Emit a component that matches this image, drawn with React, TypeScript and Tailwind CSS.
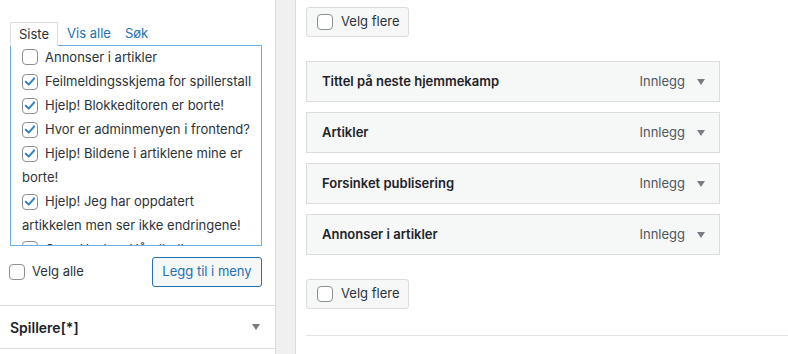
import React from 'react';

const FONT = "font-['Inter','Liberation_Sans',sans-serif]";

function Check({ checked = false }: { checked?: boolean }) {
  return (
    <span className="inline-flex h-4 w-4 shrink-0 items-center justify-center rounded-[4px] border border-[#8c8f94] bg-white align-[-3px]">
      {checked && (
        <svg viewBox="0 0 16 16" className="h-[15px] w-[15px]">
          <path d="M3.2 8.2 6.6 11.6 12.8 4.4" fill="none" stroke="#3582c4" strokeWidth="2.3" strokeLinecap="round" strokeLinejoin="round" />
        </svg>
      )}
    </span>
  );
}

function Arrow() {
  return (
    <svg viewBox="0 0 8 6" className="h-[6px] w-[8px]">
      <path d="M0 0h8L4 6z" fill="#787c82" />
    </svg>
  );
}

const ITEMS: { label: React.ReactNode; checked: boolean }[] = [
  { label: 'Annonser i artikler', checked: false },
  { label: 'Feilmeldingsskjema for spillerstall', checked: true },
  { label: 'Hjelp! Blokkeditoren er borte!', checked: true },
  { label: 'Hvor er adminmenyen i frontend?', checked: true },
  { label: <>Hjelp! Bildene i artiklene mine er<br />borte!</>, checked: true },
  { label: <>Hjelp! Jeg har oppdatert<br />artikkelen men ser ikke endringene!</>, checked: true },
  { label: 'Casa Haslum Håndball', checked: false },
];

const MENU = ['Tittel på neste hjemmekamp', 'Artikler', 'Forsinket publisering', 'Annonser i artikler'];

function VelgFlere() {
  return (
    <div className="flex h-[30px] w-[103px] items-center gap-2 rounded-[3px] border border-[#dcdcde] bg-[#f6f7f7] pl-[10px] text-[13px] text-[#2c3338]">
      <Check />
      <span>Velg flere</span>
    </div>
  );
}

export default function App() {
  return (
    <div className={`flex h-[354px] w-[788px] overflow-hidden bg-white ${FONT}`}>
      {/* Left: menu item picker */}
      <div className="flex w-[276px] shrink-0 flex-col border-r border-[#dcdcde] bg-white">
        <div className="border-b border-[#dcdcde] px-[10px] pt-[22px] pb-[18px]">
          <div className="flex h-[23px] items-end text-[13px]">
            <div className="relative z-10 -mb-px flex h-[24px] items-center border border-b-0 border-[#dcdcde] bg-white px-[8px] text-[#2c3338]">
              Siste
            </div>
            <span className="ml-[9px] flex h-[23px] items-center text-[#2271b1]">Vis alle</span>
            <span className="ml-[14px] flex h-[23px] items-center text-[#2271b1]">Søk</span>
          </div>
          <div className="h-[201px] w-[252px] overflow-hidden border border-[#72aee6] bg-white pl-[11px] pr-2 text-[13px] leading-[24px] text-[#2c3338]">
            <div className="-mt-[1px]">
              {ITEMS.map((it, i) => (
                <div key={i} className="whitespace-nowrap">
                  <Check checked={it.checked} />
                  <span className="ml-[7px]">{it.label}</span>
                </div>
              ))}
            </div>
          </div>
          <div className="mt-[11px] flex w-[252px] items-center justify-between">
            <label className="-ml-px flex items-center gap-[7px] text-[13px] text-[#2c3338]">
              <Check />
              Velg alle
            </label>
            <button className="h-[30px] w-[110px] rounded-[3px] border border-[#2271b1] bg-[#f6f7f7] text-[13px] text-[#2271b1]">
              Legg til i meny
            </button>
          </div>
        </div>
        <div className="flex h-[43px] items-center justify-between border-b border-[#dcdcde] pr-[15px] pl-[10px]">
          <span className="text-[14px] font-semibold text-[#1d2327]">Spillere[*]</span>
          <Arrow />
        </div>
      </div>

      {/* Gutter */}
      <div className="w-[20px] shrink-0 border-r border-[#dcdcde] bg-[#f0f0f1]" />

      {/* Right: menu structure */}
      <div className="flex flex-1 flex-col pt-[7px] pl-[10px]">
        <VelgFlere />
        <div className="mt-[24px] flex flex-col gap-[10px]">
          {MENU.map(t => (
            <div key={t} className="flex h-[41px] w-[414px] items-center justify-between border border-[#dcdcde] bg-[#f6f7f7] pr-[14px] pl-[15px]">
              <span className="text-[13px] font-semibold text-[#1d2327]">{t}</span>
              <div className="flex items-center gap-[12px]">
                <span className="text-[13px] text-[#50575e]">Innlegg</span>
                <Arrow />
              </div>
            </div>
          ))}
        </div>
        <div className="mt-[24px]">
          <VelgFlere />
        </div>
        <div className="mt-[26px] border-t border-[#e4e4e6]" />
      </div>
    </div>
  );
}
